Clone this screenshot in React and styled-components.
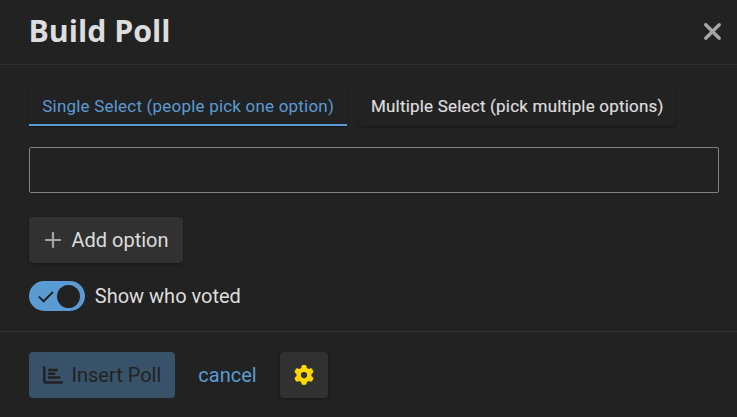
import React, { useState } from 'react';
import styled, { createGlobalStyle } from 'styled-components';
import { FaXmark, FaChartBar, FaGear } from 'react-icons/fa6';

const App = () => {
  const [mode, setMode] = useState('single');
  const [isPublic, setIsPublic] = useState(true);
  const [options, setOptions] = useState('');

  return (
    <>
      <GlobalStyle />
      <Modal>
        <Header>
          <Title>Build Poll</Title>
          <Close aria-label="close">
            <FaXmark size={27} />
          </Close>
        </Header>
        <Body>
          <Tabs>
            <Tab $active={mode === 'single'} onClick={() => setMode('single')}>
              Single Select (people pick one option)
            </Tab>
            <Tab $active={mode === 'multiple'} onClick={() => setMode('multiple')}>
              Multiple Select (pick multiple options)
            </Tab>
          </Tabs>
          <OptionInput value={options} onChange={(e) => setOptions(e.target.value)} />
          <AddButton>
            <Plus />
            Add option
          </AddButton>
          <ToggleRow onClick={() => setIsPublic(!isPublic)}>
            <Track $on={isPublic}>
              {isPublic && <Check />}
              <Knob />
            </Track>
            Show who voted
          </ToggleRow>
        </Body>
        <Footer>
          <InsertButton disabled>
            <FaChartBar size={20} />
            Insert Poll
          </InsertButton>
          <Cancel>cancel</Cancel>
          <GearButton aria-label="advanced">
            <FaGear size={20} />
          </GearButton>
        </Footer>
      </Modal>
    </>
  );
};

const Plus = () => (
  <svg width="20" height="20" viewBox="0 0 20 20" fill="none">
    <path d="M10 2.9v14.2M2.9 10h14.2" stroke="#a6a6a6" strokeWidth="2.2" strokeLinecap="round" />
  </svg>
);

const Check = () => (
  <svg width="16" height="14" viewBox="0 0 16 14" fill="none">
    <path d="M1.4 8.1 5.6 12.3 14.4 3.5" stroke="#222" strokeWidth="2" strokeLinecap="round" />
  </svg>
);

export default App;

const GlobalStyle = createGlobalStyle`
body {
  margin: 0;
  background: #222;
}
* {
  box-sizing: border-box;
}
button, input {
  font-family: inherit;
  margin: 0;
}
`;
const Modal = styled.div`
display: flex;
flex-direction: column;
height: 417px;
overflow: hidden;
background: #222;
color: #ddd;
font-family: Roboto, "Liberation Sans", sans-serif;
font-size: 20px;
line-height: 24px;
`;
const Header = styled.header`
display: flex;
align-items: center;
justify-content: space-between;
height: 65px;
padding: 0 11px 2px 28.4px;
border-bottom: 1px solid #313131;
`;
const Title = styled.h1`
margin: 0;
font-family: "Open Sans", sans-serif;
font-size: 30.3px;
line-height: 36px;
font-weight: 700;
`;
const Close = styled.button`
display: flex;
padding: 0;
border: 0;
background: none;
color: #a6a6a6;
`;
const Body = styled.main`
display: flex;
flex-direction: column;
align-items: flex-start;
height: 267px;
padding: 21px 18px 0 29px;
border-bottom: 1px solid #313131;
`;
const Tabs = styled.div`
display: flex;
gap: 11px;
margin-bottom: 21px;
`;
const Tab = styled.button`
height: 40px;
padding: 2px 12.7px 0 13.3px;
border: 0;
border-bottom: 2px solid ${({ $active }) => ($active ? '#5b9bd3' : 'transparent')};
border-radius: ${({ $active }) => ($active ? '0' : '4px')};
background: #222;
box-shadow: 0 1px 2px rgba(0, 0, 0, 0.35);
color: ${({ $active }) => ($active ? '#5b9bd3' : '#ddd')};
font-size: 17px;
letter-spacing: 0.2px;
line-height: 20px;
white-space: nowrap;
-webkit-text-stroke: ${({ $active }) => ($active ? '0' : '0.2px #ddd')};
`;
const OptionInput = styled.input`
width: 100%;
height: 46px;
padding: 8px 10px;
border: 1px solid #808080;
border-radius: 2px;
outline: none;
background: #222;
color: #ddd;
font-size: 20px;
`;
const Button = styled.button`
display: flex;
align-items: center;
height: 46px;
border: 0;
border-radius: 4px;
background: #313131;
box-shadow: 0 1px 3px rgba(0, 0, 0, 0.35);
color: #ddd;
font-size: 20px;
line-height: 24px;
white-space: nowrap;
`;
const AddButton = styled(Button)`
gap: 8.5px;
margin: 24px 0 18px;
padding: 0 14.5px 0 14px;
`;
const ToggleRow = styled.label`
display: flex;
align-items: center;
gap: 9.8px;
`;
const Track = styled.span`
display: flex;
align-items: center;
justify-content: ${({ $on }) => ($on ? 'space-between' : 'flex-start')};
width: 56px;
height: 30px;
padding: 0 5px 0 9px;
border-radius: 15px;
background: ${({ $on }) => ($on ? '#5b9bd3' : '#909090')};
`;
const Knob = styled.span`
width: 23px;
height: 23px;
border-radius: 50%;
background: #222;
`;
const Footer = styled.footer`
display: flex;
align-items: center;
padding: 20px 29px 0;
`;
const InsertButton = styled(Button)`
gap: 8.5px;
padding: 0 13.5px 0 14px;
background: #385369;
box-shadow: none;
color: #222;
`;
const Cancel = styled.a`
margin: 0 23px 0 23.5px;
color: #5b9bd3;
`;
const GearButton = styled(Button)`
justify-content: center;
width: 48px;
padding: 0;
color: #ffd600;
`;
